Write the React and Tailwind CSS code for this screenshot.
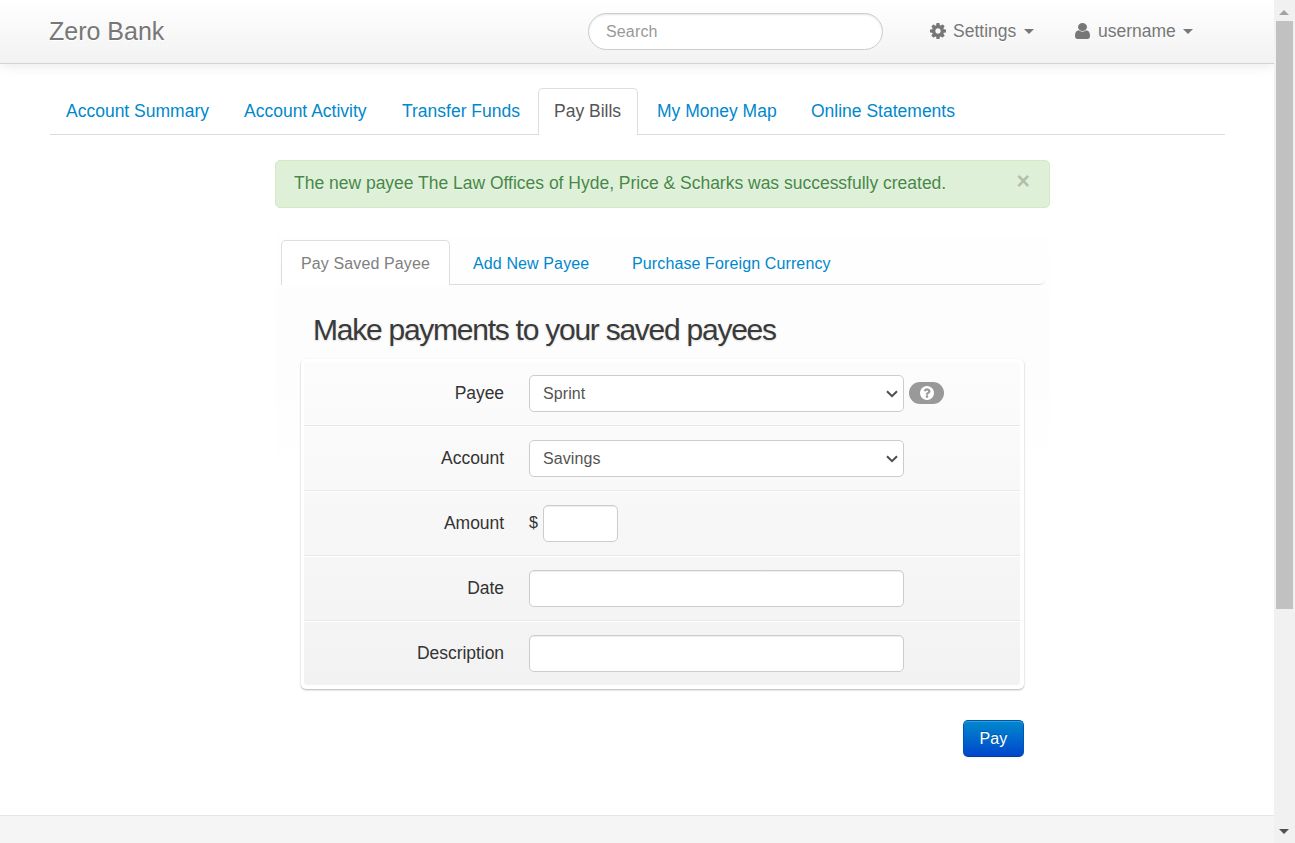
import React from "react";

const mainTabs = [
  { label: "Account Summary", box: "w-[178px]" },
  { label: "Account Activity", box: "w-[158px]" },
  { label: "Transfer Funds", box: "w-[152px]" },
  { label: "Pay Bills", box: "w-[103px]", active: true },
  { label: "My Money Map", box: "w-[154px]" },
  { label: "Online Statements", box: "w-[180px]" },
];

function CogIcon() {
  return (
    <svg viewBox="0 0 1536 1536" className="-mt-px h-4 w-4" fill="currentColor">
      <path
        transform="translate(0 -128)"
        d="M1024 896q0-106-75-181t-181-75-181 75-75 181 75 181 181 75 181-75 75-181zm512-109v222q0 12-8 23t-20 13l-185 28q-19 54-39 91 35 50 107 138 10 12 10 25t-9 23q-27 37-99 108t-94 71q-12 0-26-9l-138-108q-44 23-91 38-16 136-29 186-7 28-36 28h-222q-14 0-24.500-8.500t-11.500-21.500l-28-184q-49-16-90-37l-141 107q-10 9-25 9-14 0-25-11-126-114-165-168-7-10-7-23 0-12 8-23 15-21 51-66.500t54-70.500q-27-50-41-99l-183-27q-13-2-21-12.500t-8-23.500v-222q0-12 8-23t19-13l186-28q14-46 39-92-40-57-107-138-10-12-10-24 0-10 9-23 26-36 98.500-107.500t94.500-71.500q13 0 26 10l138 107q44-23 91-38 16-136 29-186 7-28 36-28h222q14 0 24.500 8.500t11.500 21.500l28 184q49 16 90 37l142-107q9-9 24-9 13 0 25 10 129 119 165 170 7 8 7 22 0 12-8 23-15 21-51 66.500t-54 70.500q26 50 41 98l183 28q13 2 21 12.500t8 23.500z"
      />
    </svg>
  );
}

function UserIcon() {
  return (
    <svg viewBox="0 0 1280 1536" className="-mt-px h-4 w-[15px]" preserveAspectRatio="none" fill="currentColor">
      <path
        transform="translate(0 -128)"
        d="M1280 1399q0 109-62.500 187t-150.500 78h-854q-88 0-150.500-78t-62.500-187q0-85 8.500-160.500t31.500-152 58.500-131 94-89 134.500-34.500q131 128 313 128t313-128q76 0 134.500 34.500t94 89 58.500 131 31.500 152 8.500 160.500zm-256-887q0 159-112.500 271.500t-271.500 112.500-271.500-112.500-112.500-271.500 112.500-271.500 271.500-112.500 271.500 112.500 112.500 271.500z"
      />
    </svg>
  );
}

function QuestionIcon() {
  return (
    <svg viewBox="0 0 1536 1536" className="h-[14px] w-[14px]" fill="currentColor">
      <path
        transform="translate(0 -128)"
        d="M896 1376v-192q0-14-9-23t-23-9h-192q-14 0-23 9t-9 23v192q0 14 9 23t23 9h192q14 0 23-9t9-23zm256-672q0-88-55.500-163t-138.500-116-170-41q-243 0-371 213-15 24 8 42l132 100q7 6 19 6 16 0 25-12 53-68 86-92 34-24 86-24 48 0 85.500 26t37.500 59q0 38-20 61t-68 45q-63 28-115.500 86.500t-52.500 125.500v36q0 14 9 23t23 9h192q14 0 23-9t9-23q0-19 21.500-49.500t54.500-49.500q32-18 49-28.500t46-35 44.500-48 28-60.500 12.500-81zm384 192q0 209-103 385.500t-279.500 279.500-385.500 103-385.500-103-279.500-279.500-103-385.500 103-385.500 279.500-279.500 385.500-103 385.500 103 279.500 279.500 103 385.500z"
      />
    </svg>
  );
}

function Caret() {
  return <span className="h-0 w-0 border-x-[5px] border-t-[5px] border-x-transparent border-t-[#777]" />;
}

function Header() {
  return (
    <header className="flex h-16 shrink-0 items-start border-b border-[#d4d4d4] bg-linear-to-b from-white to-[#f2f2f2] pl-[49px] text-[#777] shadow-[0_1px_12px_rgba(0,0,0,0.1)] [text-shadow:0_1px_0_#fff]">
      <a className="mt-[18px] w-[539px] text-[25px] leading-[26px]">
        <span>Zero Bank</span>
      </a>
      <div className="mt-[13px] flex h-[37px] w-[295px] items-center rounded-full border border-[#ccc] bg-white pl-[17px] shadow-[inset_0_1px_2px_rgba(0,0,0,0.1)]">
        <span className="text-[16px] leading-5 tracking-[0.15px] text-[#999]">Search</span>
      </div>
      <a className="mt-5 ml-[47px] flex h-[22px] w-[144px] items-center">
        <CogIcon />
        <span className="ml-[7px] w-[64px] text-[17.5px] whitespace-nowrap">Settings</span>
        <span className="ml-[7px] flex"><Caret /></span>
      </a>
      <a className="mt-5 flex h-[22px] items-center">
        <span className="flex w-[24px] pl-px"><UserIcon /></span>
        <span className="w-[78px] text-[17.5px] whitespace-nowrap">username</span>
        <span className="ml-[7px] flex"><Caret /></span>
      </a>
    </header>
  );
}

function MainTabs() {
  return (
    <nav className="mx-[50px] mt-6 flex h-[47px] w-[1175px] border-b border-[#ddd] text-[17.5px] leading-[25px]">
      {mainTabs.map((t) => (
        <div key={t.label} className={`${t.box} h-[47px] shrink-0 pr-[3px]`}>
          <a
            className={
              t.active
                ? "flex h-[47px] rounded-t-[5px] border border-b-0 border-[#ddd] bg-white pt-[10px] pl-[15px] text-[#555]"
                : "flex pt-[11px] pl-4 text-[#08c]"
            }
          >
            <span className="whitespace-nowrap">{t.label}</span>
          </a>
        </div>
      ))}
    </nav>
  );
}

function Chevron() {
  return (
    <svg viewBox="0 0 12 8" className="h-2 w-3" fill="none" stroke="#4d4d4d" strokeWidth="2">
      <path d="M1 1.200L6 6.200L11 1.200" />
    </svg>
  );
}

function SelectBox({ value }) {
  return (
    <div className="flex h-[37px] w-[375px] items-center justify-between rounded-[5px] border border-[#ccc] bg-white pr-[5px] pl-[13px] text-[16px] text-[#555]">
      <span className="tracking-[0.1px]">{value}</span>
      <Chevron />
    </div>
  );
}

function TextBox({ width }) {
  return (
    <div className={`${width} h-[37px] rounded-[5px] border border-[#ccc] bg-white shadow-[inset_0_1px_1px_rgba(0,0,0,0.075)]`} />
  );
}

function Row({ label, children, first, last }) {
  return (
    <div
      className={`flex items-start ${first ? "h-16 pt-[13px]" : "h-[65px] border-t border-t-white pt-[13px]"} ${
        last ? "" : "border-b border-b-[#e8e8e8]"
      }`}
    >
      <div className="w-[200px] pt-[6px] text-right text-[17.5px] leading-[25px] tracking-[-0.05px] text-[#333]">{label}</div>
      <div className="ml-[25px] flex items-center">{children}</div>
    </div>
  );
}

function PayeeForm() {
  return (
    <section className="mt-[27px] ml-[276px] h-[260px] w-[773px] bg-linear-to-b from-[#fefefe] via-[#fdfdfd] via-50% to-white pt-[5px]">
      <div className="ml-[5px] flex h-[45px] w-[764px] rounded-br-[5px] border-b border-[#ddd] text-[16px] leading-5 tracking-[0.12px]">
        <a className="h-[45px] w-[169px] rounded-t-[5px] border border-b-0 border-[#ddd] bg-white pt-[13px] pl-[19px] whitespace-nowrap text-[#808080]">
          Pay Saved Payee
        </a>
        <a className="w-[159px] pt-[14px] pl-[23px] whitespace-nowrap text-[#08c]">Add New Payee</a>
        <a className="pt-[14px] pl-[23px] whitespace-nowrap text-[#08c]">Purchase Foreign Currency</a>
      </div>
      <h2 className="mt-[25px] ml-[37px] text-[30px] leading-10 tracking-[-1.25px] whitespace-nowrap text-[#3a3a3a] [text-shadow:0_1px_2px_rgba(0,0,0,0.15)]">
        Make payments to your saved payees
      </h2>
      <div className="mt-[9px] ml-[25px] h-[330px] w-[723px] rounded-[5px] bg-white pt-[3px] pr-1 pl-[3px] shadow-[0_1px_2px_rgba(0,0,0,0.3)]">
        <div className="h-[323px] rounded-[3px] bg-linear-to-b from-[#fcfcfc] to-[#f2f2f2]">
          <Row label="Payee" first>
            <SelectBox value="Sprint" />
            <span className="mb-[2px] ml-[5px] flex h-[22px] w-[35px] items-center justify-center rounded-full bg-[#999] text-white">
              <QuestionIcon />
            </span>
          </Row>
          <Row label="Account">
            <SelectBox value="Savings" />
          </Row>
          <Row label="Amount">
            <span className="mb-[2px] w-[14px] text-[16px] text-[#333]">$</span>
            <TextBox width="w-[75px]" />
          </Row>
          <Row label="Date">
            <TextBox width="w-[375px]" />
          </Row>
          <Row label="Description" last>
            <TextBox width="w-[375px]" />
          </Row>
        </div>
      </div>
      <button className="mt-[31px] ml-[687px] flex h-[37px] w-[61px] items-center justify-center rounded-[5px] border border-[#0055b3] border-b-[#003f9c] bg-linear-to-b from-[#08c] to-[#04c] text-[16px] tracking-[0.1px] text-white shadow-[inset_0_1px_0_rgba(255,255,255,0.2),0_1px_2px_rgba(0,0,0,0.05)] [text-shadow:0_-1px_0_rgba(0,0,0,0.25)]">
        Pay
      </button>
    </section>
  );
}

function Scrollbar() {
  return (
    <aside className="flex h-full w-[21px] flex-col items-center bg-[#f1f1f1] pr-px">
      <div className="flex h-[21px] items-center pt-[3px]">
        <span className="h-0 w-0 border-x-[5px] border-b-[5px] border-x-transparent border-b-[#a3a3a3]" />
      </div>
      <div className="h-[588px] w-[17px] bg-[#c1c1c1]" />
      <div className="mt-auto flex h-[23px] items-center">
        <span className="h-0 w-0 border-x-[5px] border-t-[5px] border-x-transparent border-t-[#505050]" />
      </div>
    </aside>
  );
}

export default function App() {
  return (
    <div className="flex h-[843px] w-[1295px] overflow-hidden bg-white font-['Liberation_Sans',Arial,sans-serif]">
      <div className="flex h-full w-[1274px] flex-col overflow-hidden">
        <Header />
        <main className="flex h-[751px] shrink-0 flex-col">
          <MainTabs />
          <div className="mt-[25px] ml-[275px] flex h-12 w-[775px] shrink-0 justify-between rounded-[5px] border border-[#d6e9c6] bg-[#dff0d8] pt-[10px] pr-[19px] pl-[18px] text-[17.5px] leading-[25px] text-[#468847] [text-shadow:0_1px_0_rgba(255,255,255,0.5)]">
            <span className="tracking-[-0.01px] whitespace-nowrap">
              The new payee The Law Offices of Hyde, Price &amp; Scharks was successfully created.
            </span>
            <span className="text-[23px] leading-[20px] font-bold text-black opacity-20">×</span>
          </div>
          <PayeeForm />
        </main>
        <footer className="h-7 shrink-0 border-t border-[#e5e5e5] bg-[#f5f5f5]" />
      </div>
      <Scrollbar />
    </div>
  );
}
